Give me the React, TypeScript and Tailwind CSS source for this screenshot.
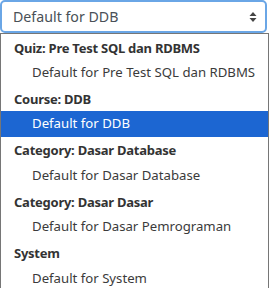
const groups = [
  { label: "Quiz: Pre Test SQL dan RDBMS", option: "Default for Pre Test SQL dan RDBMS", h: "h-[26px]" },
  { label: "Course: DDB", option: "Default for DDB", h: "h-[26px]", selected: true },
  { label: "Category: Dasar Database", option: "Default for Dasar Database", h: "h-[27px]" },
  { label: "Category: Dasar Dasar", option: "Default for Dasar Pemrograman", h: "h-[26px]" },
  { label: "System", option: "Default for System", h: "h-[27px]" },
];

export default function App() {
  return (
    <div
      className="w-[270px] h-[288px] bg-white overflow-hidden text-[#333]"
      style={{ fontFamily: '"Noto Sans", "Open Sans", sans-serif' }}
    >
      {/* ── Focused select box ───────────────────────── */}
      <div className="w-[267px] h-[33px] border-2 border-[#6aa6e6] rounded-[5px] flex items-center justify-between pl-[11px] pr-[8px] text-[14.2px] text-[#495057]">
        <span>Default for DDB</span>
        <svg width="8" height="12" viewBox="0 0 8 12" className="text-[#444]">
          <path d="M4 1 L7.5 5 H0.5 Z" fill="currentColor" />
          <path d="M4 11 L7.5 7 H0.5 Z" fill="currentColor" />
        </svg>
      </div>

      {/* ── Dropdown list ────────────────────────────── */}
      <div className="w-[269px] h-[255px] border-l border-r border-t border-[#767676] pt-[1px] text-[13.2px]">
        {groups.map((g) => (
          <div key={g.label}>
            <div className="h-[25px] flex items-center pt-[2px] pl-[13px] font-bold text-[13px] tracking-[-0.25px] text-[#333]">
              {g.label}
            </div>
            <div
              className={`${g.h} flex items-center pl-[31px] ${
                g.selected ? "bg-[#1c66d2] text-white" : "text-[#3b3b3b]"
              }`}
            >
              {g.option}
            </div>
          </div>
        ))}
      </div>
    </div>
  );
}
